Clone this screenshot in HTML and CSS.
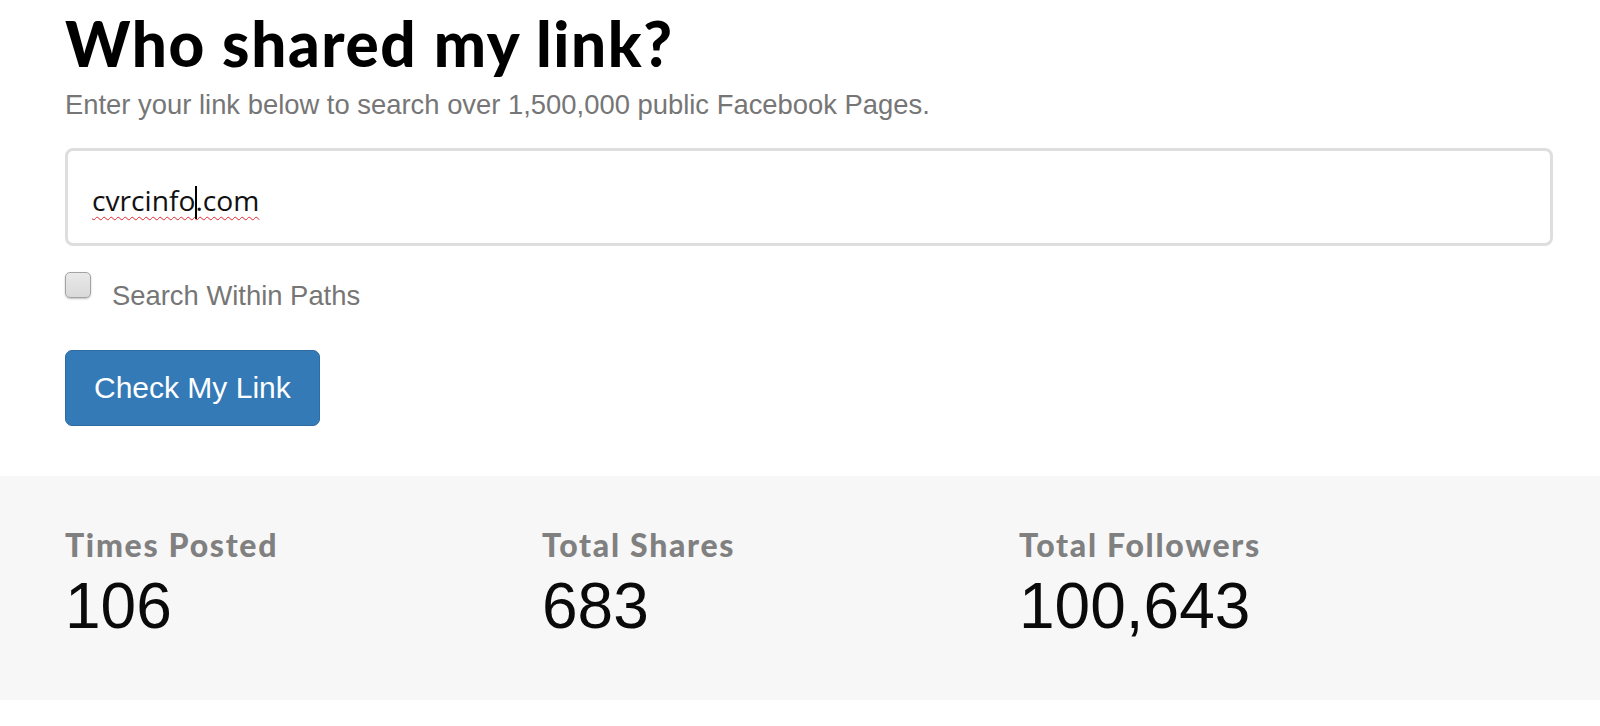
FILE: index.html
```html
<!DOCTYPE html>
<html lang="en">
<head>
<meta charset="utf-8">
<title>Who shared my link?</title>
<link rel="stylesheet" href="styles.css">
</head>
<body>
<main class="page">
  <section class="search">
    <h1 class="title">Who shared my link?</h1>
    <p class="lead">Enter your link below to search over 1,500,000 public Facebook Pages.</p>
    <div class="field"><span class="typed">cvrcinfo<span class="caret"></span>.com</span></div>
    <label class="check"><span class="box"></span><span class="check-text">Search Within Paths</span></label>
    <button class="btn" type="button">Check My Link</button>
  </section>
  <section class="stats">
    <div class="stats-row">
      <div class="stat">
        <div class="stat-label">Times Posted</div>
        <div class="stat-value">106</div>
      </div>
      <div class="stat">
        <div class="stat-label">Total Shares</div>
        <div class="stat-value">683</div>
      </div>
      <div class="stat">
        <div class="stat-label">Total Followers</div>
        <div class="stat-value">100,643</div>
      </div>
    </div>
  </section>
</main>
</body>
</html>
```

FILE: styles.css
```css
* { box-sizing: border-box; }

html, body {
  margin: 0;
  padding: 0;
  background: #fff;
}

body {
  font-family: "Liberation Sans", Arial, sans-serif;
  color: #000;
}

.search {
  padding: 12px 47px 0 65px;
  display: flex;
  flex-direction: column;
  align-items: flex-start;
}

.title {
  margin: 0;
  font-family: Lato, "Noto Sans", sans-serif;
  font-weight: 900;
  font-size: 62px;
  line-height: 62px;
  letter-spacing: 1.6px;
  color: #000;
}

.lead {
  margin: 15px 0 0;
  font-size: 27.4px;
  line-height: 32px;
  color: #767676;
}

.field {
  align-self: stretch;
  margin-top: 27px;
  height: 98px;
  border: 3px solid #dedede;
  border-radius: 8px;
  padding: 0 24px;
  display: flex;
  align-items: center;
  background: #fff;
}

.typed {
  font-family: "Open Sans", "Noto Sans", sans-serif;
  font-size: 28.2px;
  line-height: 36px;
  color: #111;
  text-decoration: underline wavy #e3262a;
  text-decoration-thickness: 1.2px;
  text-underline-offset: 5px;
  text-decoration-skip-ink: none;
  padding-top: 7px;
}

.caret {
  display: inline-block;
  width: 1.5px;
  height: 33px;
  margin-right: -1.5px;
  background: #000;
  vertical-align: -8px;
}

.check {
  margin-top: 26px;
  display: flex;
  align-items: flex-start;
  gap: 21px;
  cursor: pointer;
}

.box {
  width: 26px;
  height: 26px;
  border: 1.5px solid #a3a3a3;
  border-radius: 5px;
  background: linear-gradient(#e9e9e9, #d9d9d9);
  box-shadow: 0 1px 2px rgba(0, 0, 0, 0.25);
  flex: none;
}

.check-text {
  padding-top: 8px;
  font-size: 27.4px;
  line-height: 32px;
  color: #767676;
}

.btn {
  margin-top: 38px;
  height: 76px;
  padding: 0 28px;
  border: 1px solid #2e6da4;
  border-radius: 7px;
  background: #337ab7;
  color: #fff;
  font-family: "Liberation Sans", Arial, sans-serif;
  font-size: 30px;
  line-height: 1;
  cursor: pointer;
}

.stats {
  margin-top: 50px;
  background: #f7f7f7;
  padding: 54px 47px 62px 65px;
}

.stats-row {
  display: grid;
  grid-template-columns: repeat(3, 477px);
}

.stat-label {
  font-family: Lato, "Noto Sans", sans-serif;
  font-weight: 900;
  font-size: 32px;
  line-height: 30px;
  letter-spacing: 1.7px;
  color: #808080;
}

.stat-value {
  margin-top: 14px;
  font-size: 64px;
  line-height: 64px;
  color: #0a0a0a;
}
```
